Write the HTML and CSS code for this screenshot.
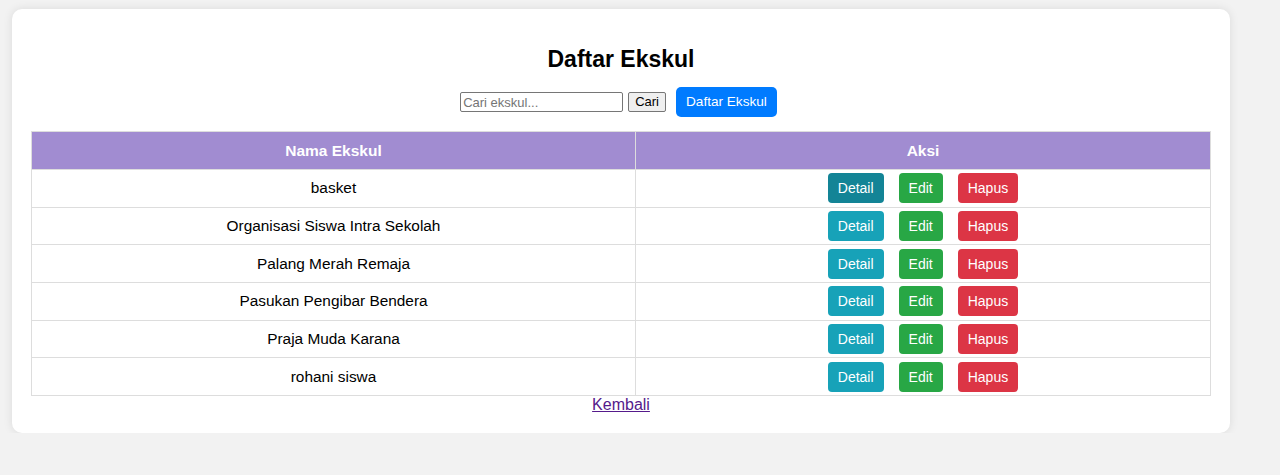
FILE: index.html
```html
<!DOCTYPE html>
<html lang="id">
<head>
<meta charset="utf-8">
<title>Daftar Ekskul</title>
<link rel="stylesheet" href="styles.css">
</head>
<body>
<div class="card">
  <h2 class="title">Daftar Ekskul</h2>
  <div class="toolbar">
    <form class="search">
      <input class="search-input" type="text" placeholder="Cari ekskul...">
      <button class="search-btn" type="button">Cari</button>
    </form>
    <a class="btn btn-primary" href="#">Daftar Ekskul</a>
  </div>
  <table class="table">
    <thead>
      <tr><th class="col-name">Nama Ekskul</th><th>Aksi</th></tr>
    </thead>
    <tbody>
      <tr><td>basket</td><td><div class="actions"><a class="btn btn-info btn-hover" href="#">Detail</a><a class="btn btn-success" href="#">Edit</a><a class="btn btn-danger" href="#">Hapus</a></div></td></tr>
      <tr><td>Organisasi Siswa Intra Sekolah</td><td><div class="actions"><a class="btn btn-info" href="#">Detail</a><a class="btn btn-success" href="#">Edit</a><a class="btn btn-danger" href="#">Hapus</a></div></td></tr>
      <tr><td>Palang Merah Remaja</td><td><div class="actions"><a class="btn btn-info" href="#">Detail</a><a class="btn btn-success" href="#">Edit</a><a class="btn btn-danger" href="#">Hapus</a></div></td></tr>
      <tr><td>Pasukan Pengibar Bendera</td><td><div class="actions"><a class="btn btn-info" href="#">Detail</a><a class="btn btn-success" href="#">Edit</a><a class="btn btn-danger" href="#">Hapus</a></div></td></tr>
      <tr><td>Praja Muda Karana</td><td><div class="actions"><a class="btn btn-info" href="#">Detail</a><a class="btn btn-success" href="#">Edit</a><a class="btn btn-danger" href="#">Hapus</a></div></td></tr>
      <tr><td>rohani siswa</td><td><div class="actions"><a class="btn btn-info" href="#">Detail</a><a class="btn btn-success" href="#">Edit</a><a class="btn btn-danger" href="#">Hapus</a></div></td></tr>
    </tbody>
  </table>
  <div class="back"><a class="back-link" href="#">Kembali</a></div>
</div>
</body>
</html>
```

FILE: styles.css
```css
* { box-sizing: border-box; }

html, body {
  margin: 0;
  background: #f2f2f2;
  font-family: "Liberation Sans", Arial, sans-serif;
  color: #000;
}

body {
  padding: 9px 0 0 12px;
}

.card {
  width: 1218px;
  background: #fff;
  border-radius: 10px;
  box-shadow: 0 0 10px rgba(0, 0, 0, 0.1);
  padding: 20px 19px 19px;
}

.title {
  margin: 16px 0 14px;
  font-size: 23px;
  line-height: 28px;
  font-weight: bold;
  text-align: center;
}

.toolbar {
  display: flex;
  justify-content: center;
  align-items: center;
  gap: 10px;
  height: 30px;
  margin-bottom: 14px;
  padding-right: 5px;
}

.search {
  display: flex;
  align-items: center;
  gap: 5px;
  margin: 0;
}

.search-input {
  width: 163px;
  height: 20px;
  border: 1px solid #767676;
  border-radius: 2px;
  padding: 1px 2px;
  font-family: "Liberation Sans", Arial, sans-serif;
  font-size: 13px;
  color: #000;
  background: #fff;
}

.search-input::placeholder {
  color: #757575;
}

.search-btn {
  height: 20px;
  padding: 1px 6px;
  border: 1px solid #767676;
  border-radius: 2px;
  background: #efefef;
  font-family: "Liberation Sans", Arial, sans-serif;
  font-size: 13px;
  color: #000;
  line-height: 16px;
}

.btn {
  display: inline-block;
  height: 30px;
  padding: 0 10px;
  line-height: 30px;
  font-size: 14px;
  color: #fff;
  text-decoration: none;
  border-radius: 4px;
  white-space: nowrap;
}

.btn-primary {
  background: #007bff;
  border-radius: 5px;
  font-size: 13.6px;
}

.btn-info { background: #17a2b8; }
.btn-hover { background: #138496; }
.btn-success { background: #28a745; }
.btn-danger { background: #dc3545; }

.table {
  width: 100%;
  border-collapse: collapse;
}

.table th,
.table td {
  border: 1px solid #ddd;
  text-align: center;
}

.table th {
  background: #a18cd1;
  color: #fff;
  font-size: 15.5px;
  font-weight: bold;
  line-height: 17px;
  padding: 10px 8px;
}

.col-name {
  width: 604px;
}

.table td {
  height: 37.67px;
  padding: 0 8px;
  font-size: 15.4px;
  line-height: 18px;
}

.actions {
  display: flex;
  justify-content: center;
  gap: 15px;
}

.back {
  text-align: center;
  font-size: 16px;
  line-height: 18px;
}

.back-link {
  color: #551a8b;
  text-decoration: underline;
}
```
